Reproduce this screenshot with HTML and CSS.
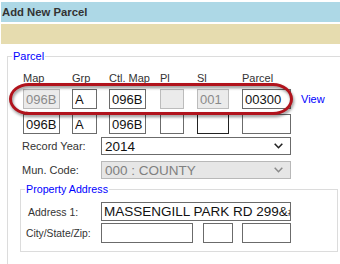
FILE: index.html
```html
<!DOCTYPE html>
<html>
<head>
<meta charset="utf-8">
<link rel="stylesheet" href="styles.css">
</head>
<body>
<div class="page">
  <div class="title">Add New Parcel</div>
  <div class="toolbar"></div>
  <fieldset class="box outer">
    <legend class="legend">Parcel</legend>
    <div class="pgrid">
      <span class="lbl">Map</span>
      <span class="lbl">Grp</span>
      <span class="lbl">Ctl. Map</span>
      <span class="lbl">Pl</span>
      <span class="lbl">Sl</span>
      <span class="lbl">Parcel</span>
      <span></span>

      <input class="fld w37 dis" value="096B" disabled>
      <input class="fld w25" value="A">
      <input class="fld w37" value="096B">
      <input class="fld w24 dis" value="" disabled>
      <input class="fld w32 dis" value="001" disabled>
      <input class="fld w49" value="00300">
      <a class="view">View</a>

      <input class="fld w37" value="096B">
      <input class="fld w25" value="A">
      <input class="fld w37" value="096B">
      <input class="fld w24" value="">
      <input class="fld w32 focus" value="">
      <input class="fld w49" value="">
      <span></span>
    </div>

    <div class="frow first">
      <span class="flbl">Record Year:</span>
      <div class="sel">
        <span>2014</span>
        <svg class="chev" width="9" height="6" viewBox="0 0 9 6"><path d="M0.7 0.8 L4.5 4.7 L8.3 0.8" fill="none" stroke="#222" stroke-width="1.6"/></svg>
      </div>
    </div>
    <div class="frow second">
      <span class="flbl">Mun. Code:</span>
      <div class="sel sel-dis">
        <span>000 : COUNTY</span>
        <svg class="chev" width="9" height="6" viewBox="0 0 9 6"><path d="M0.7 0.8 L4.5 4.7 L8.3 0.8" fill="none" stroke="#8a8a8a" stroke-width="1.5"/></svg>
      </div>
    </div>

    <fieldset class="box inner">
      <legend class="legend small">Property Address</legend>
      <div class="arow addr">
        <span class="albl">Address 1:</span>
        <input class="fld wide" value="MASSENGILL PARK RD 299&amp;#39;S">
      </div>
      <div class="arow city">
        <span class="albl clbl">City/State/Zip:</span>
        <div class="cityf">
          <input class="fld c1" value="">
          <input class="fld c2" value="">
          <input class="fld c3" value="">
        </div>
      </div>
    </fieldset>
  </fieldset>
  <div class="callout"></div>
</div>
</body>
</html>
```

FILE: styles.css
```css
html, body {
  margin: 0;
  padding: 0;
  background: #fff;
  overflow: hidden;
}
body {
  font-family: "Liberation Sans", Arial, sans-serif;
  color: #333;
}
.page {
  position: relative;
  width: 340px;
  height: 264px;
  overflow: hidden;
  padding-top: 2px;
  box-sizing: border-box;
}
.title {
  margin-left: 1px;
  height: 20px;
  line-height: 20px;
  background: #add8e6;
  font-size: 11.3px;
  font-weight: bold;
  color: #333;
  padding-left: 1px;
}
.toolbar {
  margin-top: 2px;
  margin-left: 1px;
  height: 20px;
  background: #e6dcaf;
}
.box {
  border: 1px solid #dcdcdc;
  padding: 0;
  min-width: 0;
}
.outer {
  margin: 6px -10px 0 7px;
  padding-bottom: 40px;
}
.legend {
  margin-left: 4px;
  padding: 0 1px;
  font-size: 11px;
  line-height: 12px;
  color: #0000ff;
}
.legend.small {
  font-size: 10.7px;
}
.pgrid {
  display: grid;
  grid-template-columns: 49px 37px 51px 37px 45px 59px 1fr;
  row-gap: 5px;
  align-items: center;
  padding: 10px 0 0 15px;
}
.lbl {
  font-size: 11px;
  line-height: 12px;
  color: #333;
  white-space: nowrap;
}
.fld {
  box-sizing: border-box;
  height: 20px;
  margin: 0;
  padding: 0 0 0 2px;
  border: 1px solid #6b6b6b;
  background: #fff;
  color: #111;
  font-family: "Liberation Sans", Arial, sans-serif;
  font-size: 13px;
  outline: none;
}
.fld.dis {
  background: #ebebeb;
  border-color: #bcbcbc;
  color: #8a8a8a;
}
.fld.focus {
  border-color: #222;
}
.w37 { width: 37px; }
.w25 { width: 25px; }
.w24 { width: 24px; }
.w32 { width: 32px; }
.w49 { width: 49px; }
.view {
  font-size: 11px;
  color: #0000ff;
  text-decoration: none;
}
.frow {
  display: flex;
  align-items: center;
  padding-left: 14px;
}
.frow.first { margin-top: 3px; }
.frow.second { margin-top: 6px; }
.flbl {
  width: 79px;
  font-size: 11px;
  color: #333;
}
.sel {
  box-sizing: border-box;
  width: 190px;
  height: 18px;
  border: 1px solid #6b6b6b;
  background: #fff;
  display: flex;
  align-items: center;
  justify-content: space-between;
  padding: 0 7px 0 3px;
  font-size: 13.5px;
  color: #111;
}
.sel-dis {
  background: #e6e6e6;
  border-color: #b8b8b8;
  color: #808080;
}
.chev { display: block; }
.inner {
  margin: 4px 11px 0 12px;
  padding: 7px 0 8px 0;
}
.inner > .legend { margin-left: 4px; }
.arow {
  display: flex;
  align-items: center;
  padding-left: 7px;
}
.arow.city { margin-top: 2px; }
.albl {
  width: 73px;
  font-size: 10.5px;
  color: #333;
  white-space: nowrap;
}
.clbl {
  margin-left: -2px;
  width: 75px;
  font-size: 10.3px;
}
.fld.wide {
  width: 190px;
  height: 19px;
  font-size: 13.5px;
}
.cityf {
  display: flex;
  gap: 10px;
}
.c1 { width: 92px; }
.c2 { width: 30px; margin-right: -1px; }
.c3 { width: 49px; }
.callout {
  position: absolute;
  left: 9px;
  top: 83px;
  width: 284px;
  height: 32px;
  box-sizing: border-box;
  border: 3.5px solid #b1131c;
  border-radius: 20px / 16px;
  filter: drop-shadow(1px 2px 1.5px rgba(0, 0, 0, 0.45));
}
```
